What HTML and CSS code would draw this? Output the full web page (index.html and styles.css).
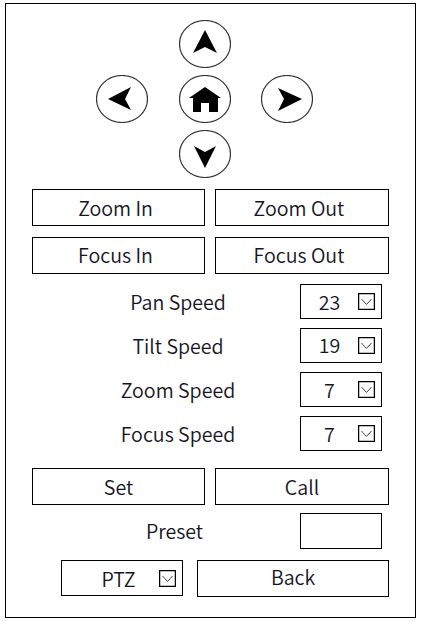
FILE: index.html
```html
<!DOCTYPE html>
<html lang="en">
<head>
    <meta charset="UTF-8">
    <title>PTZ Control</title>
    <link rel="stylesheet" href="styles.css">
</head>
<body>
<div class="frame">
    <div class="pad">
        <svg class="pad-up" viewBox="0 0 52 48"><ellipse cx="26" cy="24" rx="25.5" ry="23.5"/><path d="M26 10L14 33L26 27L38 33Z"/></svg>
        <svg class="pad-left" viewBox="0 0 52 48"><ellipse cx="26" cy="24" rx="25.5" ry="23.5"/><path d="M12 24L35 12L29 24L35 35Z"/></svg>
        <svg class="pad-home" viewBox="0 0 52 48"><ellipse cx="26" cy="24" rx="25.5" ry="23.5"/><path d="M26 12L42 23H39V37H30V28H22V37H14V23H10Z"/></svg>
        <svg class="pad-right" viewBox="0 0 52 48"><ellipse cx="26" cy="24" rx="25.5" ry="23.5"/><path d="M41 24L17 13L23 24L17 36Z"/></svg>
        <svg class="pad-down" viewBox="0 0 52 48"><ellipse cx="26" cy="24" rx="25.5" ry="23.5"/><path d="M26 38L15 16L26 22L37 16Z"/></svg>
    </div>

    <div class="btn-row">
        <button class="btn btn-shift">Zoom In</button>
        <button class="btn btn-shift">Zoom Out</button>
    </div>
    <div class="btn-row">
        <button class="btn btn-shift btn-raise">Focus In</button>
        <button class="btn btn-shift btn-raise">Focus Out</button>
    </div>

    <div class="speeds">
        <div class="field">
            <span class="field-label">Pan Speed</span>
            <div class="select"><span class="select-value">23</span><svg class="caret" viewBox="0 0 17 17"><rect x="0.5" y="0.5" width="16" height="16"/><path d="M3.500 6L8.500 11.500L13.500 6"/></svg></div>
        </div>
        <div class="field">
            <span class="field-label">Tilt Speed</span>
            <div class="select"><span class="select-value value-raise">19</span><svg class="caret" viewBox="0 0 17 17"><rect x="0.5" y="0.5" width="16" height="16"/><path d="M3.500 6L8.500 11.500L13.500 6"/></svg></div>
        </div>
        <div class="field">
            <span class="field-label">Zoom Speed</span>
            <div class="select"><span class="select-value">7</span><svg class="caret" viewBox="0 0 17 17"><rect x="0.5" y="0.5" width="16" height="16"/><path d="M3.500 6L8.500 11.500L13.500 6"/></svg></div>
        </div>
        <div class="field">
            <span class="field-label">Focus Speed</span>
            <div class="select"><span class="select-value">7</span><svg class="caret" viewBox="0 0 17 17"><rect x="0.5" y="0.5" width="16" height="16"/><path d="M3.500 6L8.500 11.500L13.500 6"/></svg></div>
        </div>
    </div>

    <div class="btn-row preset-row">
        <button class="btn">Set</button>
        <button class="btn">Call</button>
    </div>
    <div class="field preset-field">
        <span class="field-label preset-label">Preset</span>
        <input class="preset-input" type="text">
    </div>

    <div class="bottom-row">
        <div class="select select-mode"><span class="select-value">PTZ</span><svg class="caret" viewBox="0 0 17 17"><rect x="0.5" y="0.5" width="16" height="16"/><path d="M3.500 6L8.500 11.500L13.500 6"/></svg></div>
        <button class="btn btn-back">Back</button>
    </div>
</div>
</body>
</html>
```

FILE: styles.css
```css
* {
    box-sizing: border-box;
}
body {
    margin: 0;
    background-color: white;
    font-family: "Noto Sans CJK JP", "Noto Sans", sans-serif;
    font-size: 19.6px;
    font-weight: 350;
    color: #15151f;
}
.frame {
    width: 411px;
    height: 615px;
    margin: 3px 0 0 5px;
    padding: 16px 0 0 26px;
    border: 1px solid #000;
}
.pad {
    display: grid;
    grid-template-columns: 83px 82px 52px;
    grid-template-rows: repeat(3, 48px);
    row-gap: 7px;
    margin-left: 64px;
}
.pad svg {
    width: 52px;
    height: 48px;
}
.pad ellipse {
    fill: white;
    stroke: #333;
    stroke-width: 1.2;
}
.pad path {
    fill: black;
}
.pad-up {
    grid-column: 2;
    grid-row: 1;
}
.pad-left {
    grid-column: 1;
    grid-row: 2;
}
.pad-home {
    grid-column: 2;
    grid-row: 2;
}
.pad-right {
    grid-column: 3;
    grid-row: 2;
}
.pad-down {
    grid-column: 2;
    grid-row: 3;
}
.btn-row {
    display: flex;
    gap: 10px;
    margin-top: 11px;
}
.btn {
    width: 173px;
    height: 37px;
    padding: 0;
    border: 1px solid #000;
    background-color: white;
    font: inherit;
    color: inherit;
    line-height: 24px;
}
.btn-row .btn + .btn {
    width: 174px;
}
.btn-shift {
    padding-right: 6px;
}
.btn-raise {
    padding-bottom: 2px;
}
.speeds {
    display: flex;
    flex-direction: column;
    gap: 9px;
    margin-top: 10px;
}
.field {
    display: flex;
    align-items: center;
    margin-left: 24px;
}
.field-label {
    width: 244px;
    text-align: center;
}
.select {
    display: flex;
    align-items: center;
    width: 82px;
    height: 35px;
    border: 1px solid #000;
}
.select-value {
    width: 57px;
    text-align: center;
}
.value-raise {
    padding-bottom: 2px;
}
.caret {
    width: 17px;
    height: 17px;
}
.caret rect {
    fill: white;
    stroke: #000;
    stroke-width: 1.5;
}
.caret path {
    fill: none;
    stroke: #444;
}
.preset-row {
    margin-top: 17px;
}
.preset-field {
    margin-top: 8px;
}
.preset-label {
    padding: 0 7px 2px 0;
}
.preset-input {
    width: 82px;
    height: 36px;
    border: 1px solid #000;
}
.bottom-row {
    display: flex;
    gap: 14px;
    margin: 11px 0 0 29px;
}
.select-mode {
    width: 122px;
    height: 36px;
    padding-left: 16px;
}
.select-mode .select-value {
    width: 81px;
}
.btn-back {
    width: 192px;
    padding-bottom: 4px;
}
```
